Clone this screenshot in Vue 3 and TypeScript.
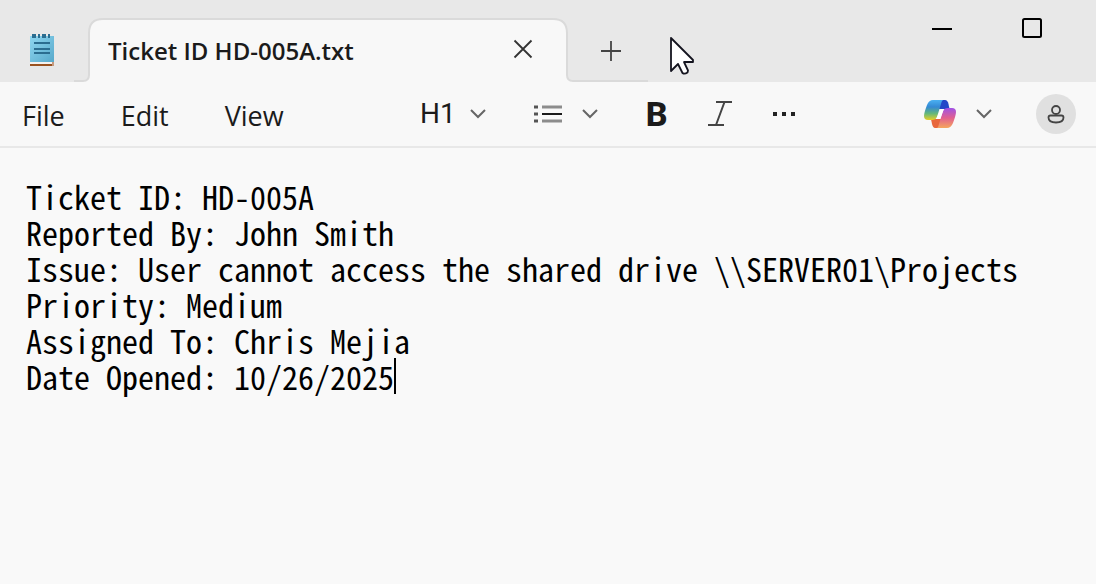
<script setup lang="ts">
import { computed, ref } from 'vue'

const fileName = 'Ticket ID HD-005A.txt'
const menus = ['File', 'Edit', 'View']
const content = ref(
  [
    'Ticket ID: HD-005A',
    'Reported By: John Smith',
    'Issue: User cannot access the shared drive \\\\SERVER01\\Projects',
    'Priority: Medium',
    'Assigned To: Chris Mejia',
    'Date Opened: 10/26/2025',
  ].join('\n'),
)

const caret = computed(() => {
  const lines = content.value.split('\n')
  const row = lines.length - 1
  return { left: `${lines[row].length}ch`, top: `${row * 36}px` }
})
</script>

<template>
  <div class="window">
    <header class="titlebar">
      <svg class="app-icon" width="24" height="34" viewBox="0 0 24 34" aria-hidden="true">
        <defs>
          <linearGradient id="pad" x1="0" y1="0" x2="1" y2="1">
            <stop offset="0" stop-color="#8fd6f0" />
            <stop offset="1" stop-color="#57a9cb" />
          </linearGradient>
        </defs>
        <path d="M0 28h24v2l-2 2H0z" fill="#f4f2f0" />
        <path d="M0 31h22v2H0z" fill="#9a5220" />
        <path d="M22 29h2v4h-2z" fill="#c59a80" />
        <path d="M0 3h24v26H0z" fill="url(#pad)" />
        <path d="M2 1h4v4H2zM8 1h2v4H8zM12 1h4v4h-4zM18 1h2v4h-2zM4 9h16v2H4zM4 15h16v2H4zM4 19h16v2H4z" fill="#2b6d90" />
      </svg>

      <div class="tab">
        <svg class="edge" width="30" height="64" viewBox="0 0 30 64" aria-hidden="true">
          <path d="M0 63H9Q15 63 15 57V15Q15 1 29 1H30V64H0z" fill="#f8f8f8" />
          <path d="M0 63H9Q15 63 15 57V15Q15 1 29 1H30" fill="none" stroke="#dadada" stroke-width="2" />
        </svg>
        <div class="tab-body">
          <span class="tab-name">{{ fileName }}</span>
          <button class="plain close" aria-label="Close tab">
            <svg width="20" height="20" viewBox="0 0 20 20"><path d="M1.500 1.500L18.500 18.500M18.500 1.500L1.500 18.500" stroke="#333" stroke-width="1.800" /></svg>
          </button>
        </div>
        <svg class="edge" width="30" height="64" viewBox="0 0 30 64" aria-hidden="true">
          <path d="M30 63H20Q14 63 14 57V15Q14 1 0 1V64H30z" fill="#f8f8f8" />
          <path d="M30 63H20Q14 63 14 57V15Q14 1 0 1" fill="none" stroke="#dadada" stroke-width="2" />
        </svg>
      </div>

      <div class="new-tab">
        <button class="plain" aria-label="New tab">
          <svg width="22" height="22" viewBox="0 0 22 22"><path d="M1 11H21M11 1V21" stroke="#444" stroke-width="1.800" /></svg>
        </button>
      </div>

      <svg class="pointer" width="26" height="40" viewBox="0 0 26 40" aria-hidden="true">
        <path d="M2 2V35L9 28L13.500 37Q15.500 38.500 18.500 36.500L19 34.500L15 26H24V24z" fill="#fff" stroke="#14141f" stroke-width="1.800" stroke-linejoin="round" />
      </svg>

      <div class="window-controls">
        <button class="plain" aria-label="Minimize">
          <svg width="20" height="20" viewBox="0 0 20 20"><path d="M0 11H20" stroke="#000" stroke-width="2" /></svg>
        </button>
        <button class="plain" aria-label="Maximize">
          <svg width="20" height="20" viewBox="0 0 20 20"><rect x="1" y="1" width="18" height="18" rx="1.500" fill="none" stroke="#000" stroke-width="2" /></svg>
        </button>
      </div>
    </header>

    <div class="toolbar">
      <nav class="menus" aria-label="Menu">
        <button v-for="menu in menus" :key="menu" class="plain menu">{{ menu }}</button>
      </nav>

      <div class="formatting">
        <div class="pickers">
          <button class="plain split tight" aria-label="Heading">
            <span class="heading">H1</span>
            <svg class="chevron" width="16" height="10" viewBox="0 0 16 10"><path d="M1 1L8 8L15 1" /></svg>
          </button>
          <button class="plain split" aria-label="List">
            <svg width="28" height="20" viewBox="0 0 28 20">
              <path d="M8 3H28M8 17H28" stroke="#8c8c8c" stroke-width="3" />
              <path d="M8 10H28" stroke="#1b1b1b" stroke-width="2" />
              <path d="M0 3H4M0 10H4M0 17H4" stroke="#555" stroke-width="3" />
            </svg>
            <svg class="chevron" width="16" height="10" viewBox="0 0 16 10"><path d="M1 1L8 8L15 1" /></svg>
          </button>
        </div>
        <div class="styles">
          <button class="plain bold" aria-label="Bold">B</button>
          <button class="plain" aria-label="Italic">
            <svg width="24" height="28" viewBox="0 0 24 28"><path d="M8 2H24M0 25H16M16.500 2L8 25" fill="none" stroke="#444" stroke-width="2" /></svg>
          </button>
          <button class="plain" aria-label="More options">
            <svg width="24" height="6" viewBox="0 0 24 6"><path d="M1 1H5V5H1zM10 1H14V5H10zM19 1H23V5H19z" fill="#222" /></svg>
          </button>
        </div>
      </div>

      <div class="account">
        <button class="plain split" aria-label="Copilot">
          <svg width="32" height="28" viewBox="0 0 32 28">
            <defs>
              <linearGradient id="cool" x1="0" y1="0" x2="0" y2="1">
                <stop offset="0" stop-color="#4ab0f2" />
                <stop offset="0.350" stop-color="#3489d4" />
                <stop offset="0.680" stop-color="#65b879" />
                <stop offset="1" stop-color="#e7cf27" />
              </linearGradient>
              <linearGradient id="warm" x1="0" y1="0" x2="0" y2="1">
                <stop offset="0" stop-color="#a052e6" />
                <stop offset="0.500" stop-color="#e2608f" />
                <stop offset="1" stop-color="#f5a65c" />
              </linearGradient>
            </defs>
            <path d="M15 0H21Q23.500 0 24.500 4L25.500 9H15z" fill="#2348c8" />
            <path d="M7 19H17L16 28H11Q9 28 8 24z" fill="#e8673c" />
            <path d="M9 0H19Q17.500 1 17 4L13 17Q12 20 8 20H4Q0 20 0 16Q0 13 3 5Q5 0 9 0z" fill="url(#cool)" />
            <path d="M24 8H28Q32 8 32 12Q32 15 29 23Q27 28 23 28H13Q14.500 27 15 24L19 11Q20 8 24 8z" fill="url(#warm)" />
            <path d="M17 9H20L16 19H12z" fill="#fff" />
          </svg>
          <svg class="chevron" width="16" height="10" viewBox="0 0 16 10"><path d="M1 1L8 8L15 1" /></svg>
        </button>
        <button class="plain avatar" aria-label="Account">
          <svg class="person" width="18" height="20" viewBox="0 0 18 20"><g fill="none" stroke="#444" stroke-width="1.800"><circle cx="9" cy="6" r="4" /><path d="M3.500 11.500H14.500Q16.500 11.500 16.500 13.500Q16.500 18.500 9 18.500Q1.500 18.500 1.500 13.500Q1.500 11.500 3.500 11.500z" /></g></svg>
        </button>
      </div>
    </div>

    <main class="editor">
      <div class="sheet">
        <textarea v-model="content" aria-label="Text editor" spellcheck="false" wrap="off"></textarea>
        <span class="caret" :style="caret"></span>
      </div>
    </main>
  </div>
</template>

<style>
body {
  margin: 0;
  background: #f9f9f9;
}
</style>

<style scoped>
.window {
  display: flex;
  flex-direction: column;
  min-height: 100vh;
  background: #f9f9f9;
  color: #1b1b1b;
  font-family: "Open Sans", "Noto Sans", sans-serif;
}

.window svg {
  display: block;
  flex: none;
}

.plain {
  margin: 0;
  padding: 0;
  border: 0;
  background: none;
  color: inherit;
  font: inherit;
}

.titlebar {
  display: flex;
  align-items: flex-end;
  height: 82px;
  padding-left: 30px;
  background: #e8e8e8;
}

.app-icon {
  margin: 0 20px 15px 0;
}

.tab {
  display: flex;
  flex: 0 1 509px;
  min-width: 0;
}

.tab-body {
  display: flex;
  flex: 1;
  align-items: center;
  justify-content: space-between;
  box-sizing: border-box;
  min-width: 0;
  height: 64px;
  padding: 0 20px 0 4px;
  border-top: 2px solid #dadada;
  background: #f8f8f8;
}

.tab-name {
  overflow: hidden;
  font-size: 24px;
  font-weight: 600;
  line-height: 32px;
  white-space: nowrap;
}

.close {
  padding-bottom: 4px;
}

.new-tab {
  display: flex;
  align-items: center;
  box-sizing: border-box;
  width: 65px;
  height: 64px;
  padding: 4px 0 0 17px;
  border-bottom: 2px solid #dadada;
}

.pointer {
  margin: 0 0 6px 21px;
}

.window-controls {
  display: flex;
  gap: 70px;
  align-self: flex-start;
  margin-left: auto;
  padding: 18px 54px 0 0;
}

.toolbar {
  display: flex;
  align-items: center;
  box-sizing: border-box;
  height: 66px;
  padding: 0 20px 0 22px;
  border-bottom: 2px solid #e8e8e8;
  background: #f8f8f8;
}

.menus {
  display: flex;
  flex: 0 0 398px;
  gap: 56px;
  padding-top: 4px;
}

.menu {
  font-size: 27px;
  line-height: 36px;
}

.formatting,
.pickers {
  display: flex;
  align-items: center;
  gap: 48px;
}

.styles {
  display: flex;
  align-items: center;
  gap: 40px;
}

.split {
  display: flex;
  align-items: center;
  gap: 20px;
}

.tight {
  gap: 14px;
}

.heading {
  font-family: Roboto, sans-serif;
  font-size: 28px;
  font-weight: 400;
  line-height: 32px;
}

.chevron {
  fill: none;
  stroke: #666;
  stroke-width: 2;
}

.bold {
  font-family: Roboto, sans-serif;
  font-size: 34px;
  font-weight: 800;
  line-height: 32px;
}

.account {
  display: flex;
  align-items: center;
  gap: 44px;
  margin-left: auto;
}

.avatar {
  display: grid;
  place-items: center;
  width: 40px;
  height: 40px;
  border-radius: 50%;
  background: #e0e0e0;
}

.editor {
  display: flex;
  flex: 1;
  padding: 30px 26px 0;
}

.sheet {
  position: relative;
  display: flex;
  flex: 1;
  color: #000;
  font-family: "Noto Sans Mono CJK SC", "DejaVu Sans Mono", monospace;
  font-size: 32px;
  font-variant-numeric: slashed-zero;
  line-height: 36px;
}

textarea {
  flex: 1;
  min-width: 0;
  margin: 0;
  padding: 0;
  border: 0;
  outline: 0;
  overflow: hidden;
  background: none;
  caret-color: transparent;
  color: inherit;
  font: inherit;
  resize: none;
}

.caret {
  position: absolute;
  width: 2px;
  height: 36px;
  background: #000;
}
</style>
